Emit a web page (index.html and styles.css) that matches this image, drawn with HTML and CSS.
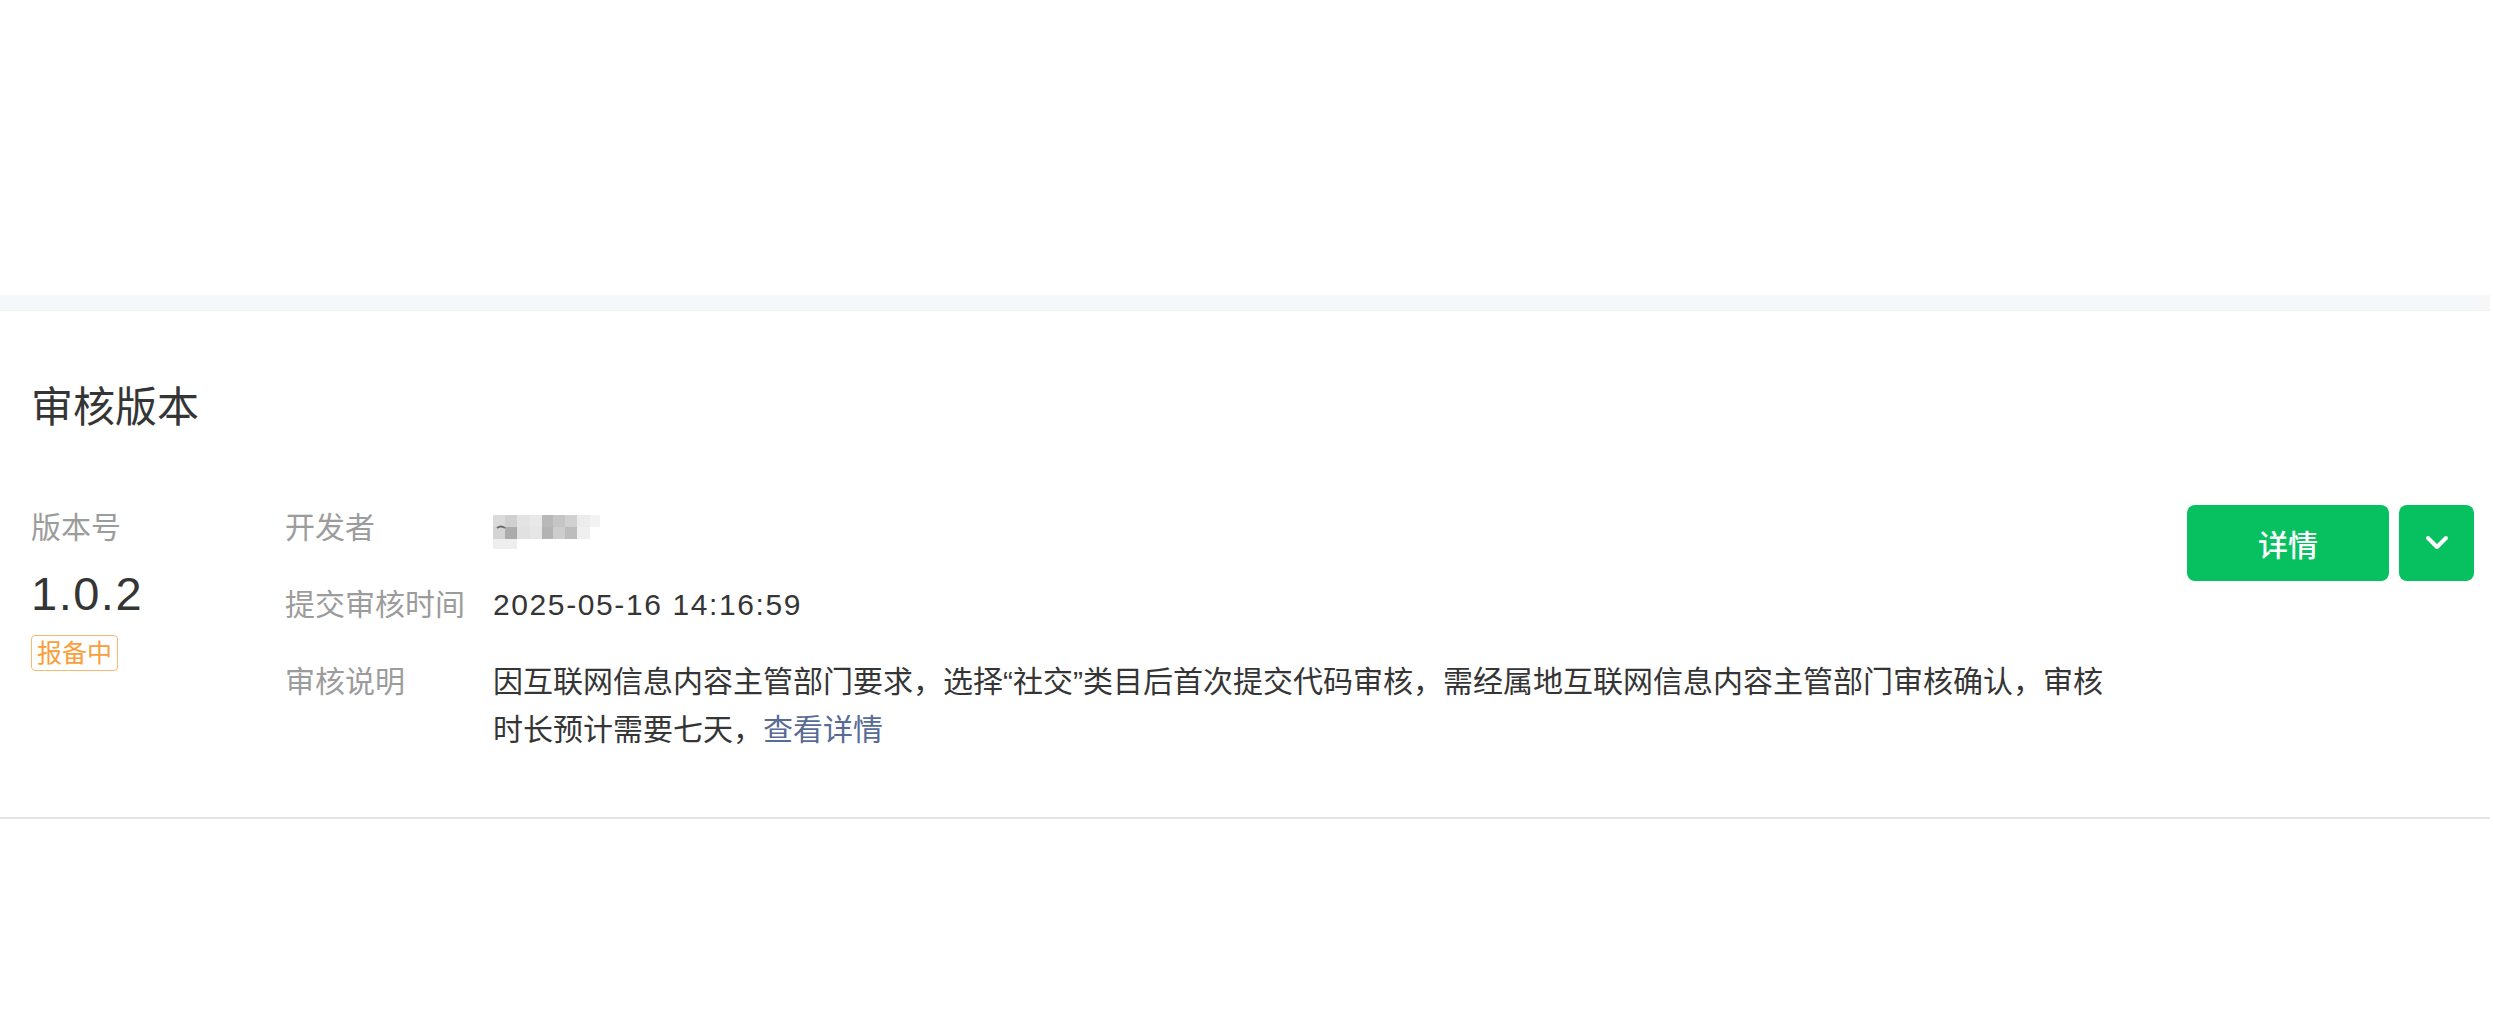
FILE: index.html
```html
<!DOCTYPE html>
<html>
<head>
    <title>审核版本</title>
    <meta charset="UTF-8">
    <meta name="viewport" content="width=device-width, initial-scale=1.0">
    <link rel="stylesheet" href="styles.css">
</head>
<body>
    <div class="page">
        <div class="blank-area"></div>
        <div class="gap-bar"></div>

        <section class="audit">
            <h2 class="audit-title">审核版本</h2>

            <div class="audit-body">
                <div class="version-col">
                    <div class="label">版本号</div>
                    <div class="version-num">1.0.2</div>
                    <span class="status-tag">报备中</span>
                </div>

                <dl class="info-list">
                    <div class="info-row">
                        <dt>开发者</dt>
                        <dd class="developer">
                            <!-- blurred developer name -->
                            <svg class="mosaic" width="108" height="36" viewBox="0 0 108 36">
                                <rect x="0" y="1" width="12" height="12" fill="#dadada"/>
                                <rect x="12" y="1" width="12" height="12" fill="#cfcfcf"/>
                                <rect x="24" y="1" width="13" height="12" fill="#e3e3e3"/>
                                <rect x="37" y="1" width="12" height="12" fill="#e8e8e8"/>
                                <rect x="49" y="1" width="11" height="12" fill="#b8b8b8"/>
                                <rect x="60" y="1" width="12" height="12" fill="#c5c5c5"/>
                                <rect x="72" y="1" width="12" height="12" fill="#d0d0d0"/>
                                <rect x="84" y="1" width="13" height="12" fill="#ececec"/>
                                <rect x="97" y="1" width="10" height="12" fill="#f3f3f3"/>
                                <rect x="0" y="13" width="12" height="12" fill="#d4d4d4"/>
                                <rect x="12" y="13" width="12" height="12" fill="#ababab"/>
                                <rect x="24" y="13" width="13" height="12" fill="#e1e1e1"/>
                                <rect x="37" y="13" width="12" height="12" fill="#e6e6e6"/>
                                <rect x="49" y="13" width="11" height="12" fill="#b3b3b3"/>
                                <rect x="60" y="13" width="12" height="12" fill="#cdcdcd"/>
                                <rect x="72" y="13" width="12" height="12" fill="#bdbdbd"/>
                                <rect x="84" y="13" width="13" height="12" fill="#efefef"/>
                                <rect x="0" y="25" width="24" height="10" fill="#eeeeee"/>
                                <path d="M4 14 q4 -3 8 0" stroke="#6a6a6a" stroke-width="2" fill="none"/>
                            </svg>
                        </dd>
                    </div>
                    <div class="info-row">
                        <dt>提交审核时间</dt>
                        <dd class="num">2025-05-16 14:16:59</dd>
                    </div>
                    <div class="info-row">
                        <dt>审核说明</dt>
                        <dd>因互联网信息内容主管部门要求，选择“社交”类目后首次提交代码审核，需经属地互联网信息内容主管部门审核确认，审核时长预计需要七天，<a class="link" href="#">查看详情</a></dd>
                    </div>
                </dl>

                <div class="actions">
                    <button class="btn-detail">详情</button>
                    <button class="btn-more">
                        <svg width="24" height="16" viewBox="0 0 24 16">
                            <polyline points="3,3 12,12 21,3" fill="none" stroke="#fff" stroke-width="4" stroke-linecap="round" stroke-linejoin="round"/>
                        </svg>
                    </button>
                </div>
            </div>
        </section>
    </div>
</body>
</html>
```

FILE: styles.css
```css
* {
    margin: 0;
    padding: 0;
    box-sizing: border-box;
}

body {
    font-family: "Liberation Sans", "Noto Sans CJK SC", sans-serif;
    background: #fff;
    color: #353535;
}

.page {
    margin-right: 3px;
}

.blank-area {
    height: 295px;
}

.gap-bar {
    height: 16px;
    background: #f6f7f9;
    border-bottom: 1px solid #f1f2f4;
}

.audit {
    padding: 67px 16px 63px 31px;
    border-bottom: 2px solid #e3e3e3;
}

.audit-title {
    font-size: 42px;
    font-weight: 400;
    line-height: 60px;
    color: #353535;
}

.audit-body {
    display: flex;
    align-items: flex-start;
    margin-top: 66px;
}

.version-col {
    width: 254px;
    display: flex;
    flex-direction: column;
    align-items: flex-start;
}

.label {
    font-size: 30px;
    line-height: 48px;
    color: #9c9c9c;
}

.version-num {
    margin-top: 12px;
    font-size: 47px;
    line-height: 60px;
    letter-spacing: 1.5px;
    color: #353535;
}

.status-tag {
    margin-top: 11px;
    padding: 0 5px;
    border: 1px solid #fcb870;
    border-radius: 4px;
    font-size: 25px;
    line-height: 34px;
    color: #fa9d3b;
}

.info-list {
    display: flex;
    flex-direction: column;
    gap: 29px;
}

.info-row {
    display: flex;
    font-size: 30px;
    line-height: 48px;
}

.info-row dt {
    width: 208px;
    flex-shrink: 0;
    color: #9c9c9c;
}

.info-row dd {
    width: 1625px;
    color: #353535;
}

.info-row dd.developer {
    display: flex;
    align-items: center;
}

.mosaic {
    display: block;
    margin-top: 8px;
}

.info-row dd.num {
    letter-spacing: 1.6px;
}

.link {
    color: #576b95;
    text-decoration: none;
}

.actions {
    margin-left: auto;
    margin-top: 1px;
    display: flex;
    gap: 10px;
}

.actions button {
    height: 76px;
    border: none;
    border-radius: 8px;
    background: #07c160;
    color: #fff;
    cursor: pointer;
    font-family: inherit;
}

.btn-detail {
    width: 202px;
    font-size: 30px;
    font-weight: 500;
}

.btn-more {
    width: 75px;
    display: flex;
    align-items: center;
    justify-content: center;
}

.btn-more svg {
    display: block;
}
```
